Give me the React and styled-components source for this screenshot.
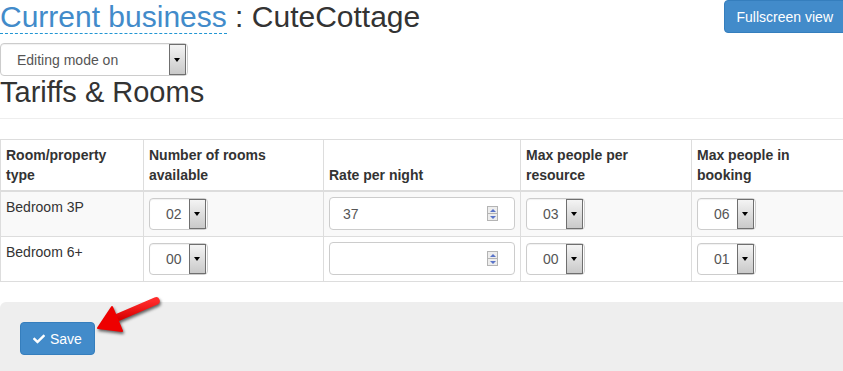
import React from "react";
import styled, { createGlobalStyle } from "styled-components";
import { FaCheck } from "react-icons/fa";

const Global = createGlobalStyle`
  html, body { margin: 0; padding: 0; overflow: hidden; background: #fff; }
  body { font-family: "Liberation Sans", Arial, sans-serif; font-size: 14px; line-height: 20px; color: #333; }
  * { box-sizing: border-box; }
`;

const Page = styled.div`
  position: relative;
  width: 843px;
  height: 371px;
  overflow: hidden;
`;

const TopBar = styled.div`
  display: flex;
  justify-content: space-between;
  align-items: flex-start;
`;

const Title = styled.h1`
  margin: 0;
  font-size: 30px;
  font-weight: normal;
  line-height: 33px;
  color: #333;
`;

const BusinessLink = styled.span`
  color: #428bca;
  border-bottom: 1px dashed #2196d3;
`;

const BlueButton = styled.button`
  display: inline-flex;
  align-items: center;
  gap: 5px;
  height: 33px;
  padding: 0 ${(p) => (p.$bleed ? 20 : 12)}px 0 12px;
  margin-right: ${(p) => p.$bleed || 0}px;
  background: #428bca;
  border: 1px solid #357ebd;
  border-radius: 4px;
  color: #fff;
  font-family: "Liberation Sans", Arial, sans-serif;
  font-size: 14px;
  cursor: pointer;
`;

const SelectBox = styled.div`
  display: flex;
  align-items: center;
  width: ${(p) => p.$w}px;
  height: ${(p) => p.$h || 32}px;
  margin: ${(p) => p.$m || "0"};
  border: 1px solid #ccc;
  border-radius: 4px;
  background: #fff;
  box-shadow: inset 0 1px 1px rgba(0, 0, 0, 0.06);
  color: #555;
  font-size: 14px;
`;

const SelectValue = styled.span`
  flex: 1;
  padding-left: 16px;
  white-space: nowrap;
`;

const DropButton = styled.span`
  position: relative;
  width: 17px;
  align-self: stretch;
  margin-right: 1px;
  border: 1px solid #6f6f6f;
  background: linear-gradient(#f4f4f4, #dcdcdc 55%, #c9c9c9);
  &::after {
    content: "";
    position: absolute;
    left: 4px;
    top: 50%;
    margin-top: -2px;
    border-left: 3.5px solid transparent;
    border-right: 3.5px solid transparent;
    border-top: 4px solid #000;
  }
`;

const Heading = styled.h2`
  margin: 0;
  font-size: 29px;
  font-weight: normal;
  line-height: 32px;
  color: #333;
`;

const Rule = styled.hr`
  margin: 10px 0 20px;
  border: 0;
  border-top: 1px solid #eee;
`;

const Table = styled.table`
  width: 843px;
  table-layout: fixed;
  border-collapse: collapse;
`;

const Th = styled.th`
  padding: 5px;
  border: 1px solid #ddd;
  border-bottom-width: 2px;
  text-align: left;
  vertical-align: bottom;
  font-weight: bold;
  line-height: 20px;
`;

const Row = styled.tr`
  background: ${(p) => (p.$striped ? "#f9f9f9" : "#fff")};
`;

const Td = styled.td`
  padding: 5px;
  border: 1px solid #ddd;
  vertical-align: top;
  line-height: 20px;
`;

const NumberInput = styled.div`
  display: flex;
  align-items: center;
  height: 33px;
  border: 1px solid #ccc;
  border-radius: 4px;
  background: #fff;
  color: #555;
  padding: 0 16px 0 13px;
`;

const NumberValue = styled.span`
  flex: 1;
`;

const Spinner = styled.span`
  display: flex;
  flex-direction: column;
  width: 11px;
  height: 15px;
  border: 1px solid #b4b4b4;
  background: #ededed;
`;

const SpinHalf = styled.span`
  flex: 1;
  display: flex;
  align-items: center;
  justify-content: center;
  border-top: ${(p) => (p.$down ? "1px solid #b4b4b4" : "0")};
  &::after {
    content: "";
    border-left: 3px solid transparent;
    border-right: 3px solid transparent;
    ${(p) => (p.$down ? "border-top: 3px solid #5a74c8;" : "border-bottom: 3px solid #5a74c8;")}
  }
`;

const Footer = styled.div`
  margin-top: 20px;
  padding: 20px;
  height: 80px;
  background: #eee;
  border-radius: 6px 0 0 0;
`;

const Arrow = styled.svg`
  position: absolute;
  left: 90px;
  top: 290px;
  overflow: visible;
  filter: drop-shadow(1px 2px 1.5px rgba(0, 0, 0, 0.6));
`;

const Select = ({ value, w = 59, h, m = "1px 0" }) => (
  <SelectBox $w={w} $h={h} $m={m}>
    <SelectValue>{value}</SelectValue>
    <DropButton />
  </SelectBox>
);

const RateInput = ({ value }) => (
  <NumberInput>
    <NumberValue>{value}</NumberValue>
    <Spinner>
      <SpinHalf />
      <SpinHalf $down />
    </Spinner>
  </NumberInput>
);

const rows = [
  { name: "Bedroom 3P", rooms: "02", rate: "37", perRes: "03", booking: "06" },
  { name: "Bedroom 6+", rooms: "00", rate: "", perRes: "00", booking: "01" },
];

export default function App() {
  return (
    <>
      <Global />
      <Page>
        <TopBar>
          <Title>
            <BusinessLink>Current business</BusinessLink> : CuteCottage
          </Title>
          <BlueButton $bleed={-11}>Fullscreen view</BlueButton>
        </TopBar>
        <Select value="Editing mode on" w={188} h={33} m="10px 0 0" />
        <Heading>Tariffs &amp; Rooms</Heading>
        <Rule />
        <Table>
          <colgroup>
            <col style={{ width: 143 }} />
            <col style={{ width: 180 }} />
            <col style={{ width: 197 }} />
            <col style={{ width: 171 }} />
            <col style={{ width: 152 }} />
          </colgroup>
          <thead>
            <tr>
              <Th>Room/property type</Th>
              <Th>Number of rooms available</Th>
              <Th>Rate per night</Th>
              <Th>Max people per resource</Th>
              <Th>Max people in booking</Th>
            </tr>
          </thead>
          <tbody>
            {rows.map((r, i) => (
              <Row key={r.name} $striped={i === 0}>
                <Td>{r.name}</Td>
                <Td><Select value={r.rooms} /></Td>
                <Td><RateInput value={r.rate} /></Td>
                <Td><Select value={r.perRes} /></Td>
                <Td><Select value={r.booking} /></Td>
              </Row>
            ))}
          </tbody>
        </Table>
        <Footer>
          <BlueButton>
            <FaCheck size={12} />
            Save
          </BlueButton>
        </Footer>
        <Arrow width="80" height="50" viewBox="90 290 80 50">
          <defs>
            <linearGradient id="ar" x1="0" y1="0" x2="0" y2="1">
              <stop offset="0" stopColor="#ff2a2a" />
              <stop offset="1" stopColor="#d80000" />
            </linearGradient>
          </defs>
          <line x1="114" y1="319" x2="156" y2="301" stroke="url(#ar)" strokeWidth="7.5" strokeLinecap="round" />
          <polygon points="98,328 112,307 122,331" fill="#ee0000" stroke="#ee0000" strokeWidth="2" strokeLinejoin="round" />
        </Arrow>
      </Page>
    </>
  );
}
